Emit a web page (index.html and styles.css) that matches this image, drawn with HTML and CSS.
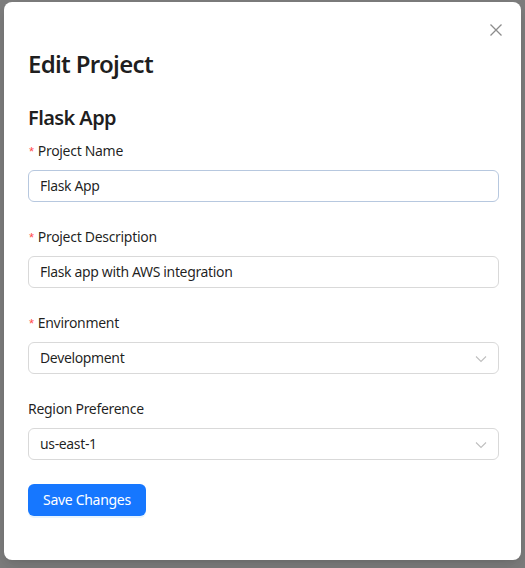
FILE: index.html
```html
<!DOCTYPE html>
<html lang="en">
<head>
<meta charset="utf-8">
<title>Edit Project</title>
<link rel="stylesheet" href="styles.css">
</head>
<body>
<div class="overlay">
  <div class="modal">
    <button class="close" aria-label="Close">
      <svg width="12" height="12" viewBox="0 0 12 12"><path d="M0.5 0.5 L11.5 11.5 M11.5 0.5 L0.5 11.5" stroke="#8c8c8c" stroke-width="1.3" fill="none"/></svg>
    </button>
    <h2 class="title">Edit Project</h2>
    <h4 class="subtitle">Flask App</h4>
    <form class="form">
      <div class="item">
        <label class="label"><span class="req">*</span>Project Name</label>
        <div class="input hover">Flask App</div>
      </div>
      <div class="item">
        <label class="label"><span class="req">*</span>Project Description</label>
        <div class="input">Flask app with AWS integration</div>
      </div>
      <div class="item">
        <label class="label"><span class="req">*</span>Environment</label>
        <div class="input select">Development
          <svg class="arrow" width="12" height="8" viewBox="0 0 12 8"><path d="M1 1.5 L6 6.5 L11 1.5" stroke="#bfbfbf" stroke-width="1.1" fill="none"/></svg>
        </div>
      </div>
      <div class="item">
        <label class="label">Region Preference</label>
        <div class="input select">us-east-1
          <svg class="arrow" width="12" height="8" viewBox="0 0 12 8"><path d="M1 1.5 L6 6.5 L11 1.5" stroke="#bfbfbf" stroke-width="1.1" fill="none"/></svg>
        </div>
      </div>
      <div class="item">
        <button type="button" class="btn">Save Changes</button>
      </div>
    </form>
  </div>
</div>
</body>
</html>
```
FILE: styles.css
```css
* { box-sizing: border-box; }
html, body { margin: 0; padding: 0; }
body {
  background: #7f7f7f;
  font-family: "Segoe UI", "Noto Sans", "Open Sans", sans-serif;
  color: rgba(0,0,0,0.88);
  width: 525px;
  height: 568px;
  overflow: hidden;
}
.overlay {
  padding: 2px 4px 0 4px;
}
.modal {
  position: relative;
  width: 517px;
  background: #fff;
  border-radius: 8px;
  padding: 20px 23px 20px 24px;
  box-shadow: 0 6px 16px 0 rgba(0,0,0,0.08), 0 3px 6px -4px rgba(0,0,0,0.12), 0 9px 28px 8px rgba(0,0,0,0.05);
}
.close {
  position: absolute;
  top: 17px;
  right: 14px;
  width: 22px;
  height: 22px;
  border: 0;
  background: transparent;
  padding: 0;
  display: flex;
  align-items: center;
  justify-content: center;
}
.title {
  margin: 26px 0 0 0;
  font-size: 24px;
  line-height: 32px;
  font-weight: 600;
  letter-spacing: -0.7px;
  color: rgba(0,0,0,0.88);
}
.subtitle {
  margin: 24px 0 8px 0;
  font-size: 20px;
  line-height: 28px;
  font-weight: 600;
  letter-spacing: -0.6px;
  color: rgba(0,0,0,0.88);
}
.form { display: flex; flex-direction: column; }
.item { margin-bottom: 24px; display: flex; flex-direction: column; align-items: flex-start; }
.label {
  font-size: 14px;
  line-height: 22px;
  height: 22px;
  margin-bottom: 8px;
  display: flex;
  align-items: center;
  letter-spacing: -0.3px;
}
.req {
  color: #ff4d4f;
  font-family: SimSun, "Liberation Sans", sans-serif;
  font-size: 13px;
  margin: 0 4px 0 1px;
  line-height: 1;
}
.input {
  width: 471px;
  height: 32px;
  border: 1px solid #d9d9d9;
  border-radius: 6px;
  padding: 4px 11px;
  font-size: 14px;
  line-height: 22px;
  letter-spacing: -0.35px;
  display: flex;
  align-items: center;
  position: relative;
}
.input.hover { border-color: #b7c8df; }
.select .arrow {
  position: absolute;
  right: 11px;
  top: 12px;
}
.btn {
  background: #1677ff;
  color: #fff;
  border: 0;
  border-radius: 6px;
  height: 32px;
  padding: 4px 15px;
  font-family: inherit;
  font-size: 14px;
  line-height: 22px;
  letter-spacing: -0.3px;
  box-shadow: 0 2px 0 rgba(5,145,255,0.1);
}
```
